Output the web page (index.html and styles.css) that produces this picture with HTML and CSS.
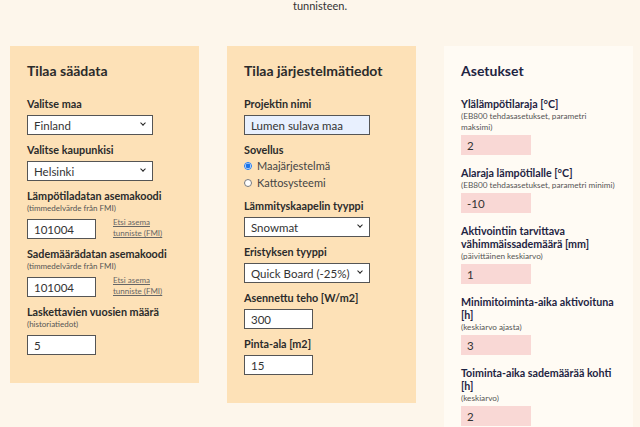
FILE: index.html
```html
<!DOCTYPE html>
<html>
<head>
    <title>Lumen sulatus - laskuri</title>
    <link rel="stylesheet" href="styles.css">
</head>
<body>
    <p class="intro">tunnisteen.</p>

    <div class="cards">
        <div class="card">
            <h2>Tilaa säädata</h2>

            <label class="label">Valitse maa</label>
            <div class="select-wrap">
                <select class="control wide">
                    <option>Finland</option>
                </select>
            </div>

            <label class="label">Valitse kaupunkisi</label>
            <div class="select-wrap">
                <select class="control wide">
                    <option>Helsinki</option>
                </select>
            </div>

            <label class="label">Lämpötiladatan asemakoodi</label>
            <div class="hint">(timmedelvärde från FMI)</div>
            <div class="row">
                <input class="control short" type="text" value="101004">
                <a class="link" href="#">Etsi asema<br>tunniste (FMI)</a>
            </div>

            <label class="label">Sademäärädatan asemakoodi</label>
            <div class="hint">(timmedelvärde från FMI)</div>
            <div class="row">
                <input class="control short" type="text" value="101004">
                <a class="link" href="#">Etsi asema<br>tunniste (FMI)</a>
            </div>

            <label class="label">Laskettavien vuosien määrä</label>
            <div class="hint">(historiatiedot)</div>
            <input class="control short" type="text" value="5">
        </div>

        <div class="card">
            <h2>Tilaa järjestelmätiedot</h2>

            <label class="label">Projektin nimi</label>
            <input class="control wide filled" type="text" value="Lumen sulava maa">

            <label class="label">Sovellus</label>
            <div class="radios">
                <label><input type="radio" name="app" checked> Maajärjestelmä</label>
                <label><input type="radio" name="app"> Kattosysteemi</label>
            </div>

            <label class="label">Lämmityskaapelin tyyppi</label>
            <div class="select-wrap">
                <select class="control wide">
                    <option>Snowmat</option>
                </select>
            </div>

            <label class="label">Eristyksen tyyppi</label>
            <div class="select-wrap">
                <select class="control wide">
                    <option>Quick Board (-25%)</option>
                </select>
            </div>

            <label class="label">Asennettu teho [W/m2]</label>
            <input class="control short" type="text" value="300">

            <label class="label">Pinta-ala [m2]</label>
            <input class="control short" type="text" value="15">
        </div>

        <div class="card settings">
            <h2>Asetukset</h2>

            <label class="label">Ylälämpötilaraja [°C]</label>
            <div class="hint">(EB800 tehdasasetukset, parametri maksimi)</div>
            <input class="control pink" type="text" value="2">

            <label class="label">Alaraja lämpötilalle [°C]</label>
            <div class="hint">(EB800 tehdasasetukset, parametri minimi)</div>
            <input class="control pink" type="text" value="-10">

            <label class="label">Aktivointiin tarvittava vähimmäissademäärä [mm]</label>
            <div class="hint">(päivittäinen keskiarvo)</div>
            <input class="control pink" type="text" value="1">

            <label class="label">Minimitoiminta-aika aktivoituna [h]</label>
            <div class="hint">(keskiarvo ajasta)</div>
            <input class="control pink" type="text" value="3">

            <label class="label">Toiminta-aika sademäärää kohti [h]</label>
            <div class="hint">(keskiarvo)</div>
            <input class="control pink" type="text" value="2">
        </div>
    </div>
</body>
</html>
```

FILE: styles.css
```css
body {
    font-family: Lato, "Open Sans", sans-serif;
    background-color: #fdf6eb;
    color: #2b2b2b;
    margin: 0;
    overflow: hidden;
}

.intro {
    margin: 0;
    text-align: center;
    font-size: 11px;
    line-height: 12px;
    color: #333;
}

.cards {
    display: flex;
    align-items: flex-start;
    gap: 28px;
    padding-left: 10px;
    margin-top: 34px;
}

.card {
    background-color: #fde1b7;
    width: 189px;
    box-sizing: border-box;
    padding: 16px 17px 20px;
}

.card h2 {
    font-size: 14px;
    line-height: 18px;
    margin: 0 0 17px;
    font-weight: 700;
}

.label {
    display: block;
    font-size: 10.8px;
    font-weight: 700;
    line-height: 14px;
    margin-bottom: 4px;
}

.hint {
    font-size: 8px;
    line-height: 11px;
    color: #555;
    margin-top: -4px;
    margin-bottom: 5px;
}

.control {
    display: block;
    box-sizing: border-box;
    height: 20px;
    margin: 0 0 8px;
    font-family: inherit;
    font-size: 11.5px;
    color: #333;
    background-color: #fff;
    border: 1px solid #555;
    border-radius: 0;
    padding: 0 6px;
}

.wide {
    width: 126px;
}

.short {
    width: 69px;
}

.filled {
    background-color: #e8f0fe;
}

select.control {
    appearance: none;
    -webkit-appearance: none;
    padding-right: 18px;
}

.select-wrap {
    position: relative;
    width: 126px;
}

.select-wrap::after {
    content: "";
    position: absolute;
    right: 8px;
    top: 6px;
    width: 3px;
    height: 3px;
    border-right: 1.5px solid #222;
    border-bottom: 1.5px solid #222;
    transform: rotate(45deg);
    pointer-events: none;
}

.row {
    display: flex;
    align-items: flex-start;
    gap: 17px;
}

.link {
    font-size: 8px;
    line-height: 11px;
    color: #666;
    margin-top: -2px;
}

.radios {
    margin-top: -4px;
    margin-bottom: 8px;
}

.radios label {
    display: flex;
    align-items: center;
    gap: 3px;
    font-size: 11px;
    line-height: 17px;
    color: #444;
}

.radios input {
    width: 8px;
    height: 8px;
    margin: 0 2px 0 0;
    accent-color: #1a73e8;
}

.settings {
    background-color: #fffbf4;
    color: #1e2442;
    padding-right: 14px;
}

.settings .label {
    font-size: 10.7px;
    line-height: 13px;
}

.settings .hint {
    font-size: 8.2px;
    max-width: 155px;
    margin-top: -3px;
    margin-bottom: 2px;
}

.settings .control {
    width: 70px;
    border: none;
    background-color: #f9d8d5;
    margin-bottom: 11px;
}
```
